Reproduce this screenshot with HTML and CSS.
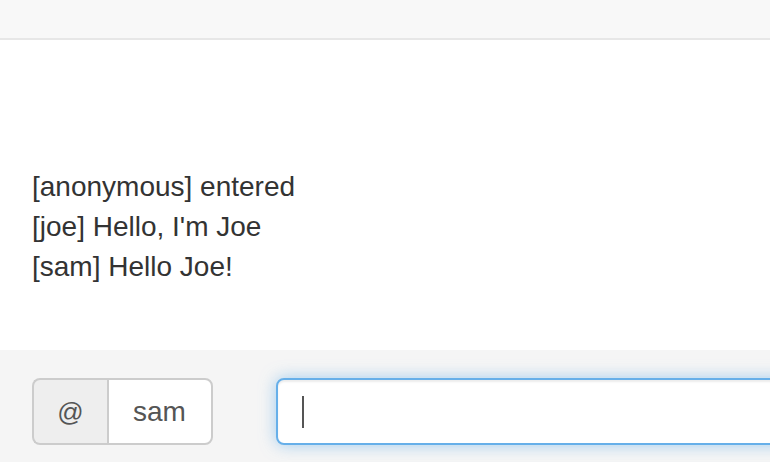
FILE: index.html
```html
<!DOCTYPE html>
<html>
<head>
<meta charset="utf-8">
<link rel="stylesheet" href="styles.css">
</head>
<body>
<div class="app">
  <header class="topbar"></header>
  <main class="messages">
    <div class="msg">[anonymous] entered</div>
    <div class="msg">[joe] Hello, I'm Joe</div>
    <div class="msg">[sam] Hello Joe!</div>
  </main>
  <footer class="composer">
    <div class="input-group">
      <span class="addon">@</span>
      <span class="name-field">sam</span>
    </div>
    <div class="text-field"><span class="caret"></span></div>
  </footer>
</div>
</body>
</html>
```

FILE: styles.css
```css
html, body {
  margin: 0;
  padding: 0;
  width: 770px;
  height: 462px;
  overflow: hidden;
  background: #fff;
}
body {
  font-family: "Liberation Sans", Arial, Helvetica, sans-serif;
  font-size: 28px;
  line-height: 40px;
  color: #333;
}
.app {
  display: flex;
  flex-direction: column;
  height: 462px;
}
.topbar {
  height: 38px;
  background: #f8f8f8;
  border-bottom: 2px solid #e7e7e7;
  flex: 0 0 auto;
}
.messages {
  height: 310px;
  display: flex;
  flex-direction: column;
  justify-content: flex-end;
  padding: 0 32px 63px;
  box-sizing: border-box;
}
.composer {
  flex: 1;
  background: #f5f5f5;
  display: flex;
  align-items: flex-start;
  gap: 63px;
  padding: 28px 0 0 32px;
  overflow: hidden;
}
.input-group {
  display: flex;
  height: 67px;
  flex: 0 0 auto;
}
.addon {
  box-sizing: border-box;
  width: 75px;
  height: 67px;
  background: #eee;
  border: 2px solid #ccc;
  border-right: 0;
  border-radius: 8px 0 0 8px;
  color: #555;
  font-size: 26px;
  display: flex;
  align-items: center;
  justify-content: center;
}
.name-field {
  box-sizing: border-box;
  width: 106px;
  height: 67px;
  background: #fff;
  border: 2px solid #ccc;
  border-radius: 0 8px 8px 0;
  color: #555;
  display: flex;
  align-items: center;
  padding-left: 24px;
}
.text-field {
  box-sizing: border-box;
  flex: 0 0 560px;
  height: 67px;
  background: #fff;
  border: 2px solid #66afe9;
  border-radius: 8px;
  box-shadow: inset 0 2px 2px rgba(0,0,0,.075), 0 0 16px rgba(102,175,233,.6);
  display: flex;
  align-items: center;
  padding-left: 24px;
}
.caret {
  width: 2px;
  height: 32px;
  background: #555;
}
```
